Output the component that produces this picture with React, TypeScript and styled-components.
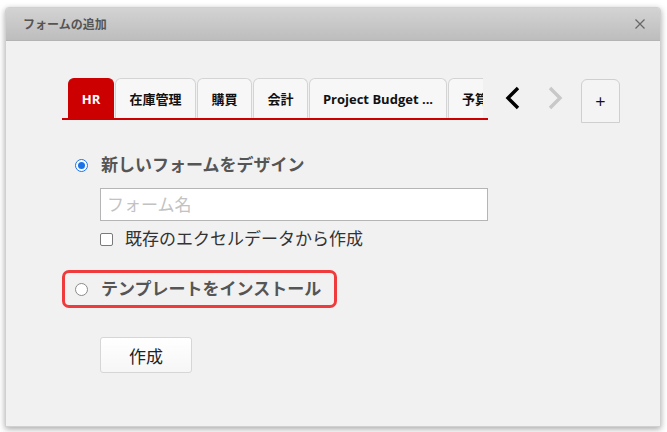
import React from "react";
import styled, { createGlobalStyle } from "styled-components";

const Global = createGlobalStyle`
  html, body { margin: 0; padding: 0; background: #ffffff; }
  body { font-family: "Open Sans", "Noto Sans CJK JP", sans-serif; }
  * { box-sizing: border-box; }
`;

const Page = styled.div`
  width: 667px;
  height: 432px;
  padding: 7px 6px 5px 5px;
  background: #fff;
`;

const Dialog = styled.div`
  width: 656px;
  height: 420px;
  background: #f1f1f1;
  border: 1px solid #d0d0d0;
  border-radius: 4px 4px 0 0;
  box-shadow: 0 2px 6px rgba(0, 0, 0, 0.35);
  display: flex;
  flex-direction: column;
  overflow: hidden;
`;

const Header = styled.div`
  height: 33px;
  flex: none;
  background: linear-gradient(#d3d3d3, #bdbdbd);
  border-bottom: 1px solid #b4b4b4;
  display: flex;
  align-items: center;
  justify-content: space-between;
  padding: 0 14px 0 17px;
`;

const Title = styled.div`
  font-size: 12px;
  font-weight: bold;
  color: #555;
`;

const Close = styled.div`
  width: 12px;
  height: 12px;
  display: flex;
`;

const Body = styled.div`
  padding: 37px 0 0 56px;
  display: flex;
  flex-direction: column;
`;

const TabRow = styled.div`
  display: flex;
  align-items: flex-end;
`;

const TabStrip = styled.div`
  width: 426px;
  height: 42px;
  border-bottom: 2px solid #cc0000;
  padding-left: 6px;
  display: flex;
  align-items: flex-end;
  overflow: hidden;
`;

const TabClip = styled.div`
  width: 415px;
  display: flex;
  gap: 1px;
  overflow: hidden;
  flex: none;
`;

const Tab = styled.div<{ $active?: boolean; $w: number; $clip?: boolean }>`
  flex: none;
  width: ${(p) => p.$w}px;
  height: 40px;
  border: 1px solid ${(p) => (p.$active ? "#cc0000" : "#d4d4d4")};
  border-bottom: none;
  border-radius: 6px 6px 0 0;
  background: ${(p) => (p.$active ? "#cc0000" : "#f7f7f7")};
  color: ${(p) => (p.$active ? "#fff" : "#111")};
  font-size: 13px;
  font-weight: bold;
  display: flex;
  align-items: center;
  justify-content: ${(p) => (p.$clip ? "flex-start" : "center")};
  padding-left: ${(p) => (p.$clip ? "13px" : "0")};
  white-space: nowrap;
  overflow: hidden;
`;

const Arrows = styled.div`
  display: flex;
  gap: 22px;
  margin-left: 15px;
  margin-bottom: 10px;
`;

const Arrow = styled.div`
  width: 20px;
  height: 24px;
  display: flex;
  align-items: center;
  justify-content: center;
`;

const PlusBtn = styled.div`
  width: 39px;
  height: 44px;
  margin-left: 16px;
  margin-bottom: -3px;
  border: 1px solid #cfcfcf;
  border-radius: 6px 6px 0 0;
  background: #f4f4f4;
  display: flex;
  align-items: center;
  justify-content: center;
  font-size: 18px;
  color: #111;
`;

const OptionRow = styled.label`
  display: flex;
  align-items: center;
  gap: 13px;
  font-size: 17px;
  line-height: 24px;
  font-weight: bold;
  color: #555;
`;

const Radio = styled.span<{ $checked?: boolean }>`
  width: 13px;
  height: 13px;
  border-radius: 50%;
  border: 1px solid ${(p) => (p.$checked ? "#1a73e8" : "#8a8a8a")};
  background: #fff;
  display: flex;
  align-items: center;
  justify-content: center;
  flex: none;
  &::after {
    content: "";
    display: ${(p) => (p.$checked ? "block" : "none")};
    width: 7px;
    height: 7px;
    border-radius: 50%;
    background: #1a73e8;
  }
`;

const FirstOption = styled.div`
  margin-top: 33px;
  padding-left: 13px;
`;

const Indent = styled.div`
  padding-left: 38px;
  margin-top: 11px;
  display: flex;
  flex-direction: column;
  gap: 6px;
`;

const Input = styled.input`
  width: 388px;
  height: 33px;
  border: 1px solid #b5b5b5;
  background: #fff;
  padding: 0 6px;
  font-size: 17px;
  font-family: "Open Sans", "Noto Sans CJK JP", sans-serif;
  &::placeholder { color: #c2c2c2; }
  outline: none;
`;

const CheckRow = styled.label`
  display: flex;
  align-items: center;
  gap: 12px;
  font-size: 17px;
  line-height: 24px;
  color: #333;
`;

const Check = styled.span`
  width: 13px;
  height: 13px;
  border: 1px solid #7a7a7a;
  border-radius: 2px;
  background: #fff;
  flex: none;
`;

const Highlight = styled.div`
  margin-top: 19px;
  width: 275px;
  height: 38px;
  border: 3px solid #ef3b3b;
  border-radius: 7px;
  display: flex;
  align-items: center;
  padding-left: 10px;
`;

const CreateButton = styled.button`
  margin-top: 29px;
  margin-left: 38px;
  width: 92px;
  height: 36px;
  border: 1px solid #d6d6d6;
  border-radius: 3px;
  background: linear-gradient(#ffffff, #f6f6f6);
  font-size: 17px;
  color: #222;
  font-family: "Open Sans", "Noto Sans CJK JP", sans-serif;
`;

const tabs = [
  { label: "HR", w: 46, active: true },
  { label: "在庫管理", w: 81 },
  { label: "購買", w: 55 },
  { label: "会計", w: 55 },
  { label: "Project Budget ...", w: 138 },
  { label: "予算管理", w: 60, clip: true },
];

export default function App() {
  return (
    <>
      <Global />
      <Page>
        <Dialog>
          <Header>
            <Title>フォームの追加</Title>
            <Close>
              <svg width="12" height="12" viewBox="0 0 12 12">
                <path d="M1.5 1.5 L10.5 10.5 M10.5 1.5 L1.5 10.5" stroke="#666" strokeWidth="1.2" />
              </svg>
            </Close>
          </Header>
          <Body>
            <TabRow>
              <TabStrip>
                <TabClip>
                  {tabs.map((t) => (
                    <Tab key={t.label} $w={t.w} $active={t.active} $clip={t.clip}>
                      {t.label}
                    </Tab>
                  ))}
                </TabClip>
              </TabStrip>
              <Arrows>
                <Arrow>
                  <svg width="20" height="24" viewBox="0 0 20 24">
                    <path d="M15 2 L5 12 L15 22" fill="none" stroke="#000" strokeWidth="3.4" />
                  </svg>
                </Arrow>
                <Arrow>
                  <svg width="20" height="24" viewBox="0 0 20 24">
                    <path d="M5 2 L15 12 L5 22" fill="none" stroke="#c8c8c8" strokeWidth="3.4" />
                  </svg>
                </Arrow>
              </Arrows>
              <PlusBtn>+</PlusBtn>
            </TabRow>
            <FirstOption>
              <OptionRow>
                <Radio $checked />
                新しいフォームをデザイン
              </OptionRow>
            </FirstOption>
            <Indent>
              <Input placeholder="フォーム名" />
              <CheckRow>
                <Check />
                既存のエクセルデータから作成
              </CheckRow>
            </Indent>
            <Highlight>
              <OptionRow>
                <Radio />
                テンプレートをインストール
              </OptionRow>
            </Highlight>
            <CreateButton>作成</CreateButton>
          </Body>
        </Dialog>
      </Page>
    </>
  );
}
